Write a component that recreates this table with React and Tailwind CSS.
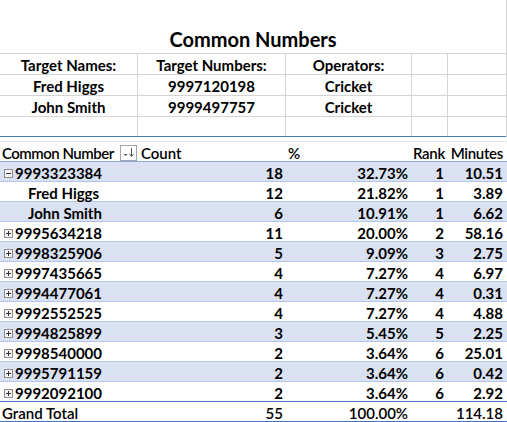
import React from 'react';

const FONT = { fontFamily: 'Lato, "Open Sans", Arial, sans-serif' };

const targets = [
  { name: 'Fred Higgs', number: '9997120198', op: 'Cricket' },
  { name: 'John Smith', number: '9999497757', op: 'Cricket' },
];

const rows = [
  { label: '9993323384', count: 18, pct: '32.73%', rank: 1, min: '10.51', open: true },
  { label: 'Fred Higgs', count: 12, pct: '21.82%', rank: 1, min: '3.89', child: true },
  { label: 'John Smith', count: 6, pct: '10.91%', rank: 1, min: '6.62', child: true },
  { label: '9995634218', count: 11, pct: '20.00%', rank: 2, min: '58.16' },
  { label: '9998325906', count: 5, pct: '9.09%', rank: 3, min: '2.75' },
  { label: '9997435665', count: 4, pct: '7.27%', rank: 4, min: '6.97' },
  { label: '9994477061', count: 4, pct: '7.27%', rank: 4, min: '0.31' },
  { label: '9992552525', count: 4, pct: '7.27%', rank: 4, min: '4.88' },
  { label: '9994825899', count: 3, pct: '5.45%', rank: 5, min: '2.25' },
  { label: '9998540000', count: 2, pct: '3.64%', rank: 6, min: '25.01' },
  { label: '9995791159', count: 2, pct: '3.64%', rank: 6, min: '0.42' },
  { label: '9992092100', count: 2, pct: '3.64%', rank: 6, min: '2.92' },
];

const cols = 'grid grid-cols-[138px_148px_126px_36px_59px]';

const Toggle = ({ open }) => (
  <svg width="9" height="9" viewBox="0 0 9 9" className="shrink-0">
    <rect x="0.5" y="0.5" width="8" height="8" fill="#f4f4f4" stroke="#8c8c8c" />
    <line x1="2" y1="4.5" x2="7" y2="4.5" stroke="#333" />
    {!open && <line x1="4.5" y1="2" x2="4.5" y2="7" stroke="#333" />}
  </svg>
);

const FilterButton = () => (
  <svg width="17" height="16" viewBox="0 0 17 16">
    <rect x="0.5" y="0.5" width="16" height="15" fill="#fff" stroke="#a6a6a6" />
    <path d="M3.5 9 L7.5 9 L5.5 11 Z" fill="#555" />
    <line x1="11.5" y1="3" x2="11.5" y2="11" stroke="#555" />
    <path d="M9.5 9 L11.5 11.5 L13.5 9" fill="none" stroke="#555" />
  </svg>
);

export default function App() {
  return (
    <div className="w-[507px] h-[422px] bg-white text-black overflow-hidden" style={FONT}>
      {/* header block */}
      <div className="w-[507px] border-r border-[#d4d4d4]">
        <div className="h-[54px] border-b border-[#d4d4d4] flex items-end justify-center pb-[4px]">
          <span className="text-[20px] font-bold leading-none">Common Numbers</span>
        </div>
        <div className={`${cols} h-[21px] border-b border-[#d4d4d4] text-[15px] font-bold`}>
          <div className="border-r border-[#d4d4d4] flex items-center justify-center">Target Names:</div>
          <div className="border-r border-[#d4d4d4] flex items-center justify-center">Target Numbers:</div>
          <div className="border-r border-[#d4d4d4] flex items-center justify-center">Operators:</div>
          <div className="border-r border-[#d4d4d4]" />
          <div />
        </div>
        {targets.map((t) => (
          <div key={t.name} className={`${cols} h-[21px] border-b border-[#d4d4d4] text-[15px] font-bold`}>
            <div className="border-r border-[#d4d4d4] flex items-center justify-center">{t.name}</div>
            <div className="border-r border-[#d4d4d4] flex items-center justify-center">{t.number}</div>
            <div className="border-r border-[#d4d4d4] flex items-center justify-center">{t.op}</div>
            <div className="border-r border-[#d4d4d4]" />
            <div />
          </div>
        ))}
        <div className={`${cols} h-[20px] border-b border-[#4a7ebb]`}>
          <div className="border-r border-[#d4d4d4]" />
          <div className="border-r border-[#d4d4d4]" />
          <div className="border-r border-[#d4d4d4]" />
          <div className="border-r border-[#d4d4d4]" />
          <div />
        </div>
      </div>
      <div className="h-[5px] border-b border-[#e1e1e1]" />

      {/* pivot table */}
      <div className="text-[15px]">
        <div className={`${cols} h-[20px] border-b border-[#8ea9db] items-center font-semibold`}>
          <div className="flex items-center justify-between pl-[2px] pr-[1px]">
            <span className="tracking-[-0.5px]">Common Number</span>
            <FilterButton />
          </div>
          <div className="pl-[3px]">Count</div>
          <div className="pl-[2px]">%</div>
          <div className="pl-[1px] tracking-[-0.3px]">Rank</div>
          <div className="text-right pr-[4px] tracking-[-0.3px]">Minutes</div>
        </div>
        {rows.map((r, i) => (
          <div
            key={r.label}
            className={`${cols} items-center font-bold ${i % 2 === 0 ? 'bg-[#d9e1f2]' : 'bg-white'} ${
              i === rows.length - 1 ? 'h-[19px]' : 'h-[20px] border-b border-[#b4c6e7]'
            }`}
          >
            {r.child ? (
              <div className="pl-[28px]">{r.label}</div>
            ) : (
              <div className="flex items-center gap-[2px] pl-[4px]">
                <Toggle open={r.open} />
                <span>{r.label}</span>
              </div>
            )}
            <div className="text-right pr-[3px]">{r.count}</div>
            <div className="text-right pr-[4px]">{r.pct}</div>
            <div className="text-right pr-[4px]">{r.rank}</div>
            <div className="text-right pr-[4px]">{r.min}</div>
          </div>
        ))}
        <div className={`${cols} h-[21px] items-center border-y border-[#4472c4] font-semibold`}>
          <div className="pl-[2px]">Grand Total</div>
          <div className="text-right pr-[3px]">55</div>
          <div className="text-right pr-[4px]">100.00%</div>
          <div />
          <div className="text-right pr-[4px]">114.18</div>
        </div>
      </div>
    </div>
  );
}
